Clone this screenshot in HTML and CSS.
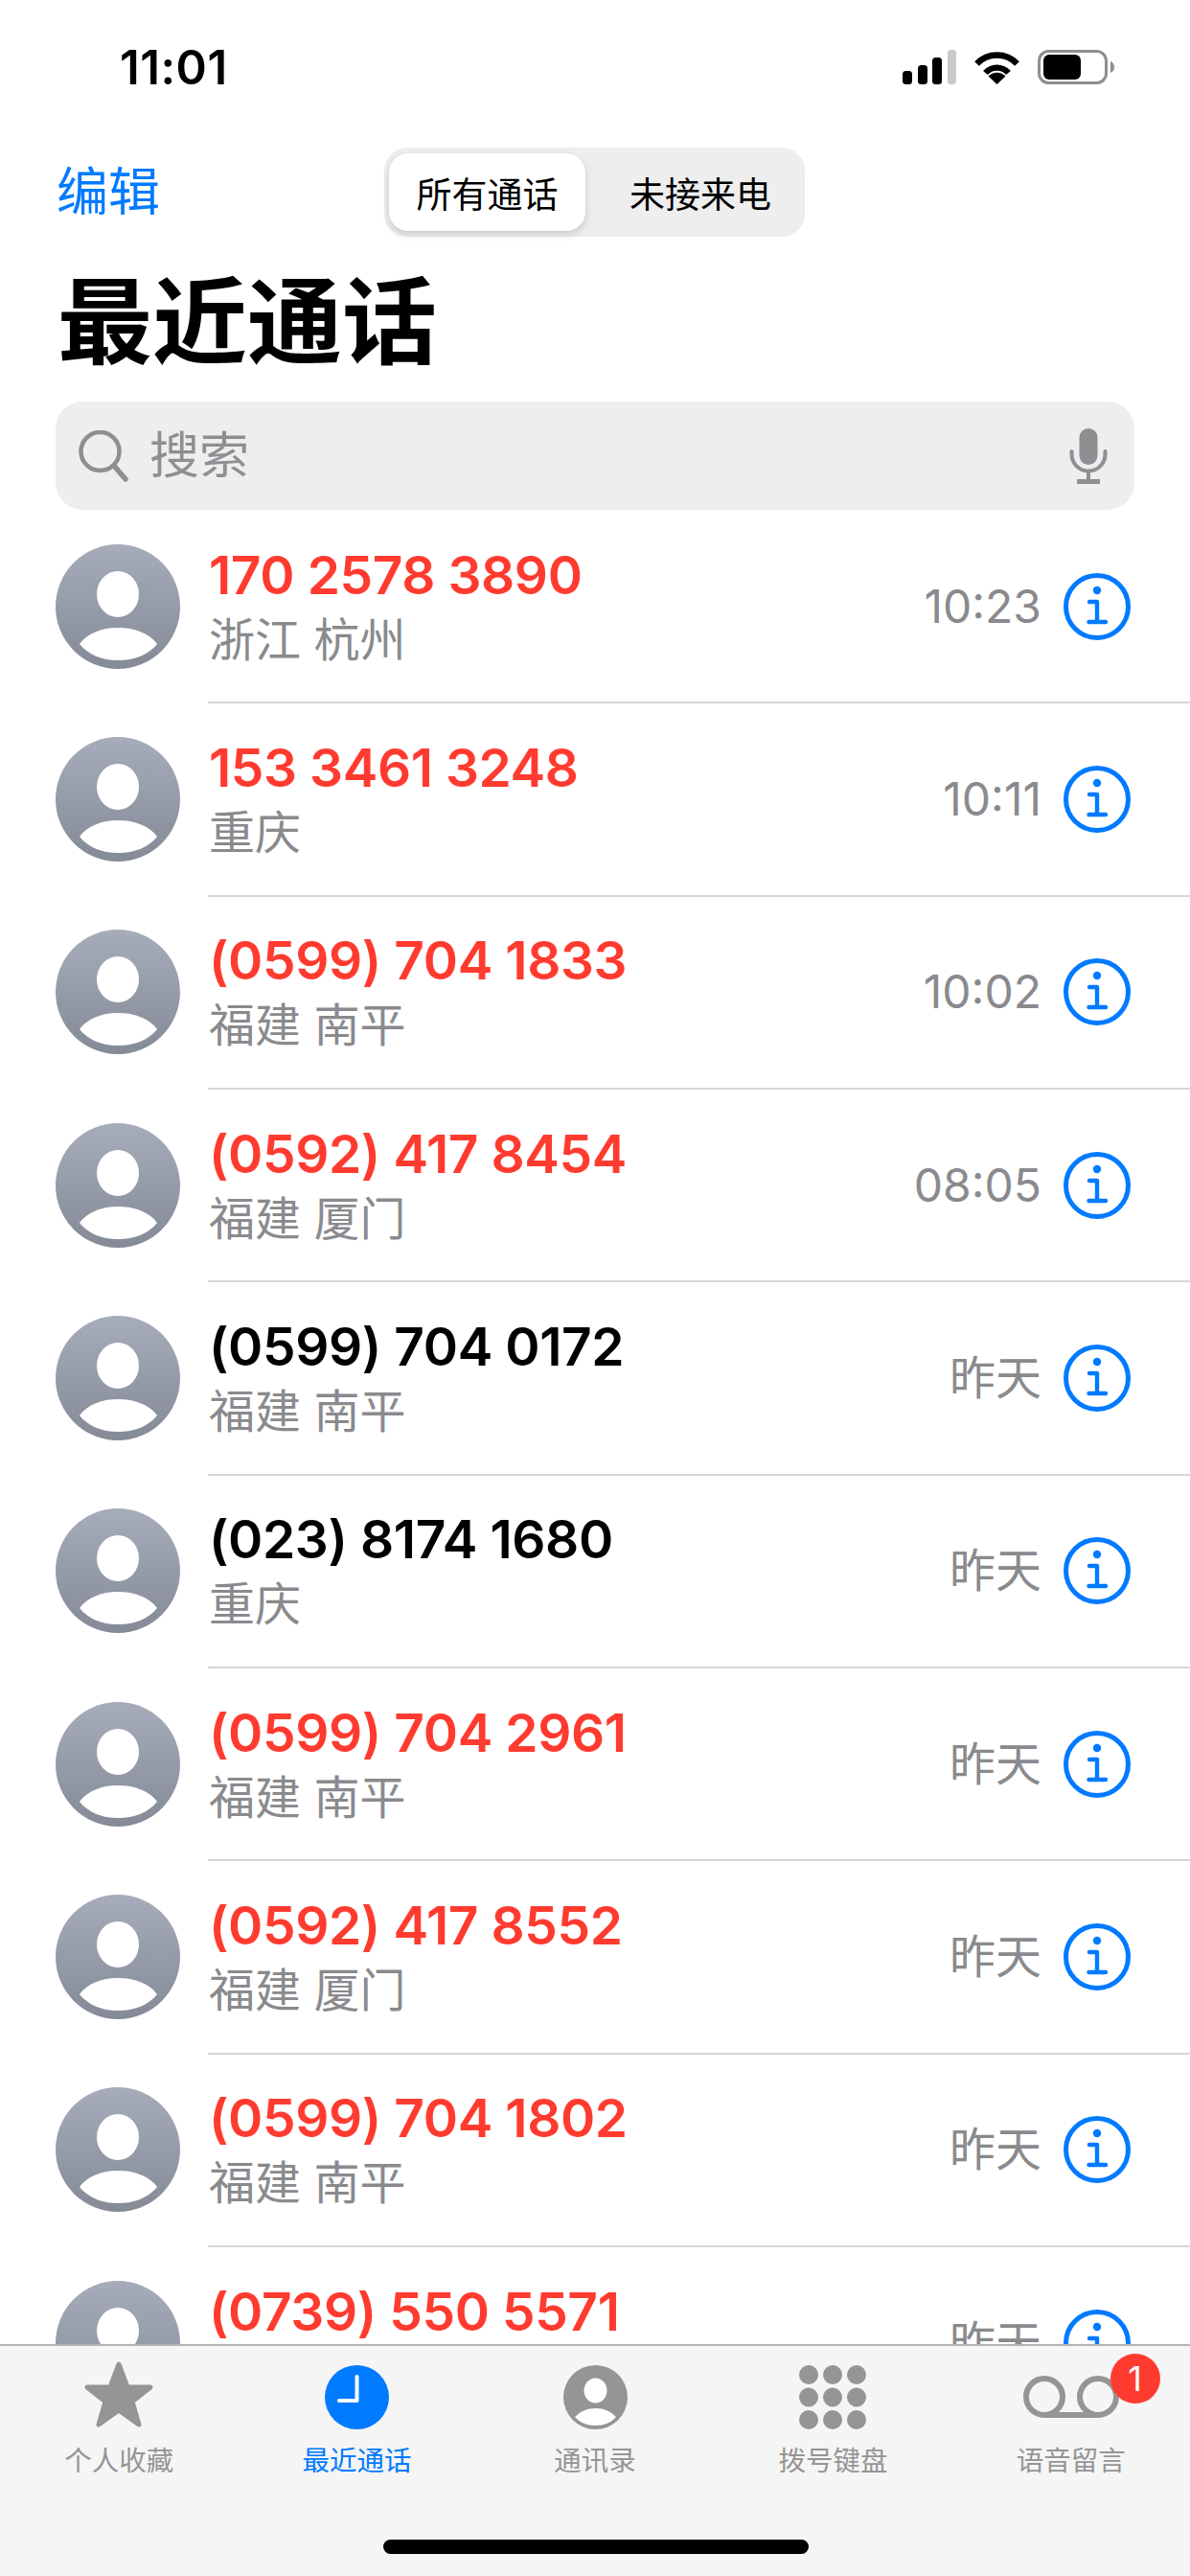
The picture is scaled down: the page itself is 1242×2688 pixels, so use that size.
FILE: index.html
```html
<!DOCTYPE html>
<html lang="zh-CN">
<head>
<meta charset="utf-8">
<title>最近通话</title>
<link rel="stylesheet" href="styles.css">
</head>
<body>
<svg class="defs" width="0" height="0" aria-hidden="true">
  <defs>
    <linearGradient id="avatarGrad" x1="0" y1="0" x2="0" y2="1">
      <stop offset="0" stop-color="#a6acba"/>
      <stop offset="1" stop-color="#858a97"/>
    </linearGradient>
    <symbol id="avatar" viewBox="0 0 130 130">
      <circle cx="65" cy="65" r="65" fill="url(#avatarGrad)"/>
      <ellipse cx="65" cy="52" rx="22" ry="24" fill="#fff"/>
      <path d="M25 104C33 93 48 87 65 87C83 87 98 93 106 104C97 115 83 121 65 121C48 121 34 115 25 104Z" fill="#fff"/>
    </symbol>
    <symbol id="info" viewBox="0 0 70 70">
      <circle cx="35" cy="35" r="32.5" fill="none" stroke="#007aff" stroke-width="5"/>
      <circle cx="35" cy="18" r="4.2" fill="#007aff"/>
      <path d="M27 30H35V51M26.5 51H44" fill="none" stroke="#007aff" stroke-width="4.4" stroke-linecap="round" stroke-linejoin="round"/>
    </symbol>
  </defs>
</svg>
<div class="phone">
  <header class="status">
    <span class="clock">11:01</span>
    <div class="status-icons">
      <svg class="ic-signal" width="56" height="36" viewBox="0 0 56 36">
        <rect x="0" y="22" width="10" height="14" rx="3.5" fill="#000"/>
        <rect x="16" y="16" width="10" height="20" rx="3.5" fill="#000"/>
        <rect x="31" y="8" width="10" height="28" rx="3.5" fill="#000"/>
        <rect x="47" y="0" width="9" height="36" rx="3.5" fill="#c9c9c9"/>
      </svg>
      <svg class="ic-wifi" width="49" height="36" viewBox="0 0 49 36">
        <path d="M3.5 14.5A29 29 0 0 1 45.5 14.5M12.5 24A16 16 0 0 1 36.5 24" fill="none" stroke="#000" stroke-width="6.4"/>
        <path d="M24.5 36L15.5 27.5A12.4 12.4 0 0 1 33.5 27.5Z" fill="#000"/>
      </svg>
      <svg class="ic-battery" width="80" height="36" viewBox="0 0 80 36">
        <rect x="1.5" y="1.5" width="70" height="33" rx="10" fill="none" stroke="#8e8e93" stroke-width="3"/>
        <rect x="6" y="5" width="39" height="26" rx="6" fill="#000"/>
        <path d="M76 12C79 13 80 15.500 80 18C80 20.500 79 23 76 24Z" fill="#8e8e93"/>
      </svg>
    </div>
  </header>

  <nav class="nav">
    <span class="edit">编辑</span>
    <div class="segment">
      <span class="seg-item seg-active">所有通话</span>
      <span class="seg-item seg-second">未接来电</span>
    </div>
  </nav>

  <h1 class="title">最近通话</h1>

  <div class="search">
    <svg class="ic-search" width="52" height="54" viewBox="0 0 52 54">
      <circle cx="22.500" cy="22" r="20" fill="none" stroke="#8e8e93" stroke-width="4.500"/>
      <path d="M37 37L49 51" fill="none" stroke="#8e8e93" stroke-width="5.500" stroke-linecap="round"/>
    </svg>
    <span class="search-text">搜索</span>
    <svg class="ic-mic" width="40" height="58" viewBox="0 0 40 58">
      <rect x="10.500" y="0" width="19" height="38" rx="9.500" fill="#8e8e93"/>
      <path d="M2.500 24V27A17.500 17.500 0 0 0 37.500 27V24" fill="none" stroke="#8e8e93" stroke-width="4" stroke-linecap="round"/>
      <path d="M20 45V54" fill="none" stroke="#8e8e93" stroke-width="4"/>
      <rect x="8" y="53" width="24" height="5" fill="#8e8e93"/>
    </svg>
  </div>

  <main class="list">
    <div class="row">
      <svg class="avatar"><use href="#avatar"/></svg>
      <div class="row-body">
        <div class="row-text"><div class="num missed">170 2578 3890</div><div class="sub">浙江 杭州</div></div>
        <span class="time">10:23</span>
        <svg class="info"><use href="#info"/></svg>
      </div>
    </div>
    <div class="row">
      <svg class="avatar"><use href="#avatar"/></svg>
      <div class="row-body">
        <div class="row-text"><div class="num missed">153 3461 3248</div><div class="sub">重庆</div></div>
        <span class="time">10:11</span>
        <svg class="info"><use href="#info"/></svg>
      </div>
    </div>
    <div class="row">
      <svg class="avatar"><use href="#avatar"/></svg>
      <div class="row-body">
        <div class="row-text"><div class="num missed">(0599) 704 1833</div><div class="sub">福建 南平</div></div>
        <span class="time">10:02</span>
        <svg class="info"><use href="#info"/></svg>
      </div>
    </div>
    <div class="row">
      <svg class="avatar"><use href="#avatar"/></svg>
      <div class="row-body">
        <div class="row-text"><div class="num missed">(0592) 417 8454</div><div class="sub">福建 厦门</div></div>
        <span class="time">08:05</span>
        <svg class="info"><use href="#info"/></svg>
      </div>
    </div>
    <div class="row">
      <svg class="avatar"><use href="#avatar"/></svg>
      <div class="row-body">
        <div class="row-text"><div class="num">(0599) 704 0172</div><div class="sub">福建 南平</div></div>
        <span class="time">昨天</span>
        <svg class="info"><use href="#info"/></svg>
      </div>
    </div>
    <div class="row">
      <svg class="avatar"><use href="#avatar"/></svg>
      <div class="row-body">
        <div class="row-text"><div class="num">(023) 8174 1680</div><div class="sub">重庆</div></div>
        <span class="time">昨天</span>
        <svg class="info"><use href="#info"/></svg>
      </div>
    </div>
    <div class="row">
      <svg class="avatar"><use href="#avatar"/></svg>
      <div class="row-body">
        <div class="row-text"><div class="num missed">(0599) 704 2961</div><div class="sub">福建 南平</div></div>
        <span class="time">昨天</span>
        <svg class="info"><use href="#info"/></svg>
      </div>
    </div>
    <div class="row">
      <svg class="avatar"><use href="#avatar"/></svg>
      <div class="row-body">
        <div class="row-text"><div class="num missed">(0592) 417 8552</div><div class="sub">福建 厦门</div></div>
        <span class="time">昨天</span>
        <svg class="info"><use href="#info"/></svg>
      </div>
    </div>
    <div class="row">
      <svg class="avatar"><use href="#avatar"/></svg>
      <div class="row-body">
        <div class="row-text"><div class="num missed">(0599) 704 1802</div><div class="sub">福建 南平</div></div>
        <span class="time">昨天</span>
        <svg class="info"><use href="#info"/></svg>
      </div>
    </div>
    <div class="row">
      <svg class="avatar"><use href="#avatar"/></svg>
      <div class="row-body">
        <div class="row-text"><div class="num missed">(0739) 550 5571</div><div class="sub"></div></div>
        <span class="time">昨天</span>
        <svg class="info"><use href="#info"/></svg>
      </div>
    </div>
  </main>

  <footer class="tabs">
    <div class="tab">
      <div class="tab-icon">
        <svg width="72" height="74" viewBox="0 0 72 74">
          <path d="M36 3L45 27H69L50 42L57 66L36 51L15 66L22 42L3 27H27Z" fill="#959595" stroke="#959595" stroke-width="5" stroke-linejoin="round"/>
        </svg>
      </div>
      <span class="tab-label">个人收藏</span>
    </div>
    <div class="tab tab-active">
      <div class="tab-icon">
        <svg width="67" height="67" viewBox="0 0 67 67">
          <circle cx="33.500" cy="33.500" r="33.500" fill="#007aff"/>
          <path d="M33.500 12V37H15" fill="none" stroke="#fff" stroke-width="4" stroke-linecap="round" stroke-linejoin="round"/>
        </svg>
      </div>
      <span class="tab-label">最近通话</span>
    </div>
    <div class="tab">
      <div class="tab-icon">
        <svg width="67" height="67" viewBox="0 0 67 67">
          <circle cx="33.500" cy="33.500" r="33.500" fill="#959595"/>
          <ellipse cx="33.500" cy="26.500" rx="12" ry="13" fill="#fff"/>
          <path d="M12 54C18 48 25 45 33.500 45C42 45 49 48 55 54C50 60 42 63 33.500 63C25 63 17 60 12 54Z" fill="#fff"/>
        </svg>
      </div>
      <span class="tab-label">通讯录</span>
    </div>
    <div class="tab">
      <div class="tab-icon">
        <svg width="70" height="67" viewBox="0 0 70 67">
          <g fill="#959595">
            <ellipse cx="10" cy="10" rx="10" ry="10"/><ellipse cx="35" cy="10" rx="10" ry="10"/><ellipse cx="60" cy="10" rx="10" ry="10"/>
            <ellipse cx="10" cy="33.500" rx="10" ry="10"/><ellipse cx="35" cy="33.500" rx="10" ry="10"/><ellipse cx="60" cy="33.500" rx="10" ry="10"/>
            <ellipse cx="10" cy="57" rx="10" ry="10"/><ellipse cx="35" cy="57" rx="10" ry="10"/><ellipse cx="60" cy="57" rx="10" ry="10"/>
          </g>
        </svg>
      </div>
      <span class="tab-label">拨号键盘</span>
    </div>
    <div class="tab">
      <div class="tab-icon">
        <svg width="100" height="44" viewBox="0 0 100 44">
          <g fill="none" stroke="#959595" stroke-width="6">
            <circle cx="22" cy="22" r="19"/>
            <circle cx="78" cy="22" r="19"/>
            <path d="M22 41H78"/>
          </g>
        </svg>
      </div>
      <span class="tab-label">语音留言</span>
      <span class="badge">1</span>
    </div>
    <span class="home"></span>
  </footer>
</div>
</body>
</html>
```
FILE: styles.css
```css
* { box-sizing: border-box; }

html, body {
  margin: 0;
  padding: 0;
  background: #fff;
}

body {
  font-family: Inter, "Noto Sans CJK SC", sans-serif;
  color: #000;
}

.defs { position: absolute; }

.phone {
  position: relative;
  width: 1242px;
  height: 2688px;
  overflow: hidden;
  background: #fff;
}

/* status bar */
.status {
  height: 154px;
  padding: 52px 79px 0 125px;
  display: flex;
  justify-content: space-between;
  align-items: flex-start;
}

.clock {
  margin-top: 1px;
  font-size: 49px;
  font-weight: 600;
  line-height: 36px;
  letter-spacing: 0.5px;
}

.status-icons {
  display: flex;
  align-items: flex-start;
  gap: 18px;
}

/* nav */
.nav {
  height: 93px;
  display: grid;
  grid-template-columns: 1fr auto 1fr;
  align-items: center;
  padding-left: 59px;
  padding-right: 60px;
}

.edit {
  font-size: 54px;
  line-height: 60px;
  color: #007aff;
  grid-column: 1;
}

.segment {
  grid-column: 2;
  display: flex;
  align-items: center;
  width: 439px;
  height: 93px;
  padding: 6px 5px;
  background: #eeeeef;
  border-radius: 24px;
}

.seg-item {
  width: 205px;
  height: 81px;
  display: flex;
  align-items: center;
  justify-content: center;
  font-size: 37px;
  border-radius: 20px;
}

.seg-second {
  width: 224px;
  padding-left: 16px;
}

.seg-active {
  background: #fff;
  box-shadow: 0 4px 8px rgba(0, 0, 0, 0.14), 0 0 2px rgba(0, 0, 0, 0.08);
}

/* title */
.title {
  height: 172px;
  margin: 0;
  padding: 6px 0 0 60px;
  display: flex;
  align-items: center;
  font-size: 99px;
  font-weight: 700;
  line-height: 1;
}

/* search */
.search {
  height: 113px;
  margin: 0 58px;
  padding: 0 28px 0 24px;
  display: flex;
  align-items: center;
  background: #eeeeef;
  border-radius: 28px;
}

.search-text {
  flex: 1;
  margin-left: 22px;
  font-size: 52px;
  line-height: 60px;
  color: #8e8e93;
}

/* list */
.list { padding-top: 1px; }

.row {
  height: 201.33px;
  padding-left: 58px;
  display: flex;
  align-items: center;
}

.avatar {
  flex: none;
  width: 130px;
  height: 130px;
  margin-right: 29px;
  margin-bottom: 2px;
}

.row-body {
  flex: 1;
  height: 100%;
  padding-right: 62px;
  display: flex;
  align-items: center;
  border-bottom: 2px solid #d6d6d8;
}

.row-text {
  flex: 1;
  padding: 4px 0 0 1px;
}

.num {
  font-size: 55px;
  font-weight: 600;
  line-height: 66px;
  letter-spacing: -0.4px;
  white-space: nowrap;
}

.missed { color: #ff3b30; }

.sub {
  height: 70px;
  font-size: 48px;
  line-height: 70px;
  color: #8a8a8e;
}

.time {
  margin-right: 23px;
  font-size: 48px;
  line-height: 60px;
  color: #8a8a8e;
}

.info {
  flex: none;
  width: 70px;
  height: 70px;
}

/* tab bar */
.tabs {
  position: absolute;
  left: 0;
  right: 0;
  top: 2446px;
  height: 242px;
  display: flex;
  align-items: flex-start;
  background: #f5f5f6;
  border-top: 2px solid #b4b4b6;
}

.tab {
  position: relative;
  flex: 1;
  padding-top: 18px;
  display: flex;
  flex-direction: column;
  align-items: center;
}

.tab-icon {
  height: 70px;
  display: flex;
  align-items: center;
  justify-content: center;
}

.tab-label {
  margin-top: 14px;
  font-size: 28.5px;
  line-height: 36px;
  color: #959595;
}

.tab-active .tab-label { color: #007aff; }

.badge {
  position: absolute;
  left: 165px;
  top: 8px;
  width: 52px;
  height: 52px;
  display: flex;
  align-items: center;
  justify-content: center;
  border-radius: 50%;
  background: #ff3b30;
  color: #fff;
  font-size: 36px;
  line-height: 1;
}

.home {
  position: absolute;
  left: 400px;
  top: 202px;
  width: 444px;
  height: 15px;
  border-radius: 8px;
  background: #000;
}
```
